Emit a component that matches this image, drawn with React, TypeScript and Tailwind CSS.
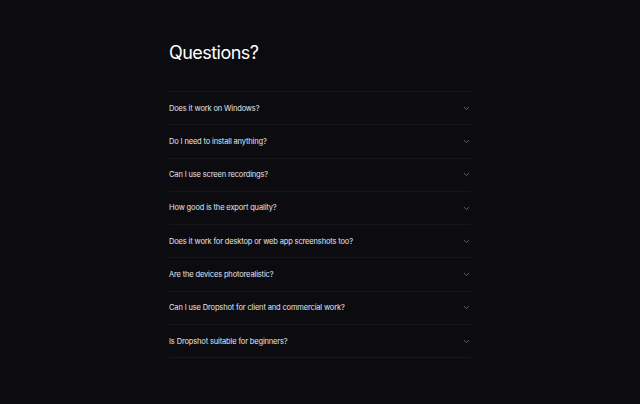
import React from "react";

const questions = [
  "Does it work on Windows?",
  "Do I need to install anything?",
  "Can I use screen recordings?",
  "How good is the export quality?",
  "Does it work for desktop or web app screenshots too?",
  "Are the devices photorealistic?",
  "Can I use Dropshot for client and commercial work?",
  "Is Dropshot suitable for beginners?",
];

function Chevron() {
  return (
    <svg width="7" height="7" viewBox="0 0 10 10" fill="none" className="text-[#6b6b73]">
      <path d="M2 3.5 L5 6.5 L8 3.5" stroke="currentColor" strokeWidth="1.3" strokeLinecap="round" strokeLinejoin="round" />
    </svg>
  );
}

export default function App() {
  return (
    <div className="w-[640px] h-[404px] bg-[#0c0c10] flex justify-center" style={{ fontFamily: "Inter, 'Liberation Sans', sans-serif" }}>
      <div className="w-[302px] pt-[42px]">
        <h2 className="text-[18px] leading-[22px] text-white tracking-[-0.03em] font-normal">Questions?</h2>
        <div className="mt-[27px] border-t border-[#16161b]">
          {questions.map((q) => (
            <div key={q} className="h-[33.3px] flex items-center justify-between border-b border-[#16161b]">
              <span className="text-[7.5px] text-[#e6e6ea] tracking-[-0.02em]">{q}</span>
              <span className="pr-[1px]"><Chevron /></span>
            </div>
          ))}
        </div>
      </div>
    </div>
  );
}
